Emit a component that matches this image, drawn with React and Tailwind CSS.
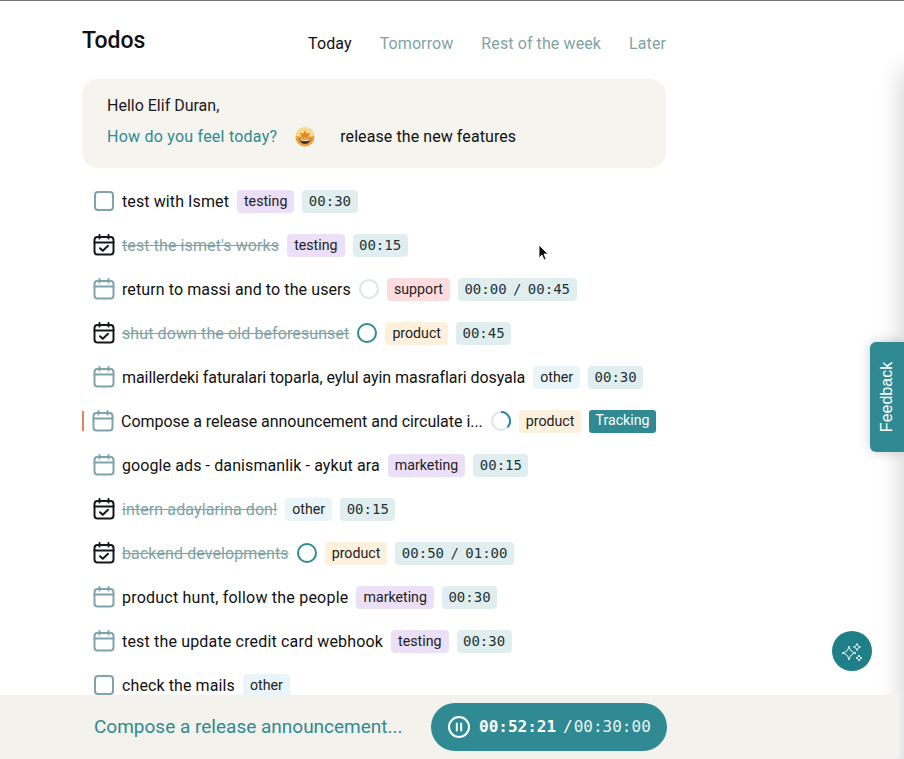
import React from "react";

const tagStyles = {
  testing: "bg-[#ecdff8]",
  support: "bg-[#fcdcde]",
  product: "bg-[#fdf1dd]",
  other: "bg-[#eaf5fb]",
  marketing: "bg-[#ecdff8]",
};

const todos = [
  { text: "test with Ismet", tag: "testing", time: "00:30", icon: "box" },
  { text: "test the ismet's works", tag: "testing", time: "00:15", icon: "done" },
  { text: "return to massi and to the users", tag: "support", time: "00:00 / 00:45", icon: "cal", ring: "idle" },
  { text: "shut down the old beforesunset", tag: "product", time: "00:45", icon: "done", ring: "full" },
  { text: "maillerdeki faturalari toparla, eylul ayin masraflari dosyala", tag: "other", time: "00:30", icon: "cal", spacing: "tracking-[-0.07px]" },
  { text: "Compose a release announcement and circulate i...", tag: "product", icon: "cal", ring: "part", active: true, spacing: "tracking-[-0.03px]" },
  { text: "google ads - danismanlik - aykut ara", tag: "marketing", time: "00:15", icon: "cal" },
  { text: "intern adaylarina don!", tag: "other", time: "00:15", icon: "done" },
  { text: "backend developments", tag: "product", time: "00:50 / 01:00", icon: "done", ring: "full" },
  { text: "product hunt, follow the people", tag: "marketing", time: "00:30", icon: "cal", spacing: "tracking-[0.22px]" },
  { text: "test the update credit card webhook", tag: "testing", time: "00:30", icon: "cal", spacing: "tracking-[0.17px]" },
  { text: "check the mails", tag: "other", icon: "box" },
];

const CalendarIcon = ({ done }) => (
  <svg className="shrink-0" width="22" height="22" viewBox="0 0 22 22" fill="none" stroke={done ? "#14181c" : "#7fa3ab"} strokeWidth="2" strokeLinecap="round" strokeLinejoin="round">
    <rect x="1.5" y="3" width="19" height="17.5" rx="3" />
    <path d="M1.5 8.5h19M6.5 1v3.5M15.5 1v3.5" />
    {done && <path d="M7 14.2l2.8 2.6 5.2-5" />}
  </svg>
);

const StatusIcon = ({ type }) => {
  if (type === "box") {
    return <span className="block shrink-0 w-[20px] h-[20px] mx-px rounded-[4px] border-2 border-[#7fa3ab]" />;
  }
  return <CalendarIcon done={type === "done"} />;
};

const Ring = ({ type }) => {
  if (type === "part") {
    return (
      <svg width="20" height="20" viewBox="0 0 20 20" fill="none" strokeWidth="2">
        <circle cx="10" cy="10" r="9" stroke="#dbe6e6" />
        <path d="M10 1a9 9 0 0 1 6.5 15.2" stroke="#2f8a93" />
      </svg>
    );
  }
  return (
    <span className={`block w-[20px] h-[20px] rounded-full border-2 ${type === "full" ? "border-[#2f8a93]" : "border-[#dbe6e6]"}`} />
  );
};

const StarFace = () => (
  <svg width="20" height="20" viewBox="0 0 20 20">
    <circle cx="10" cy="10" r="9.5" fill="#e9a23b" />
    <path d="M1 9a9 9 0 0 1 18 0c-3 1-15 1-18 0z" fill="#f6dc8e" />
    <path d="M10 3l1.500 3.500 3.500-.8-1.500 4.300h-7L5 5.700l3.500.8z" fill="#e8862a" />
    <path d="M4 11.500c3 1 9 1 12 0-.6 3.500-3 5.500-6 5.500s-5.400-2-6-5.500z" fill="#5d3312" />
    <path d="M5 12c3 .7 7 .7 10 0l-.5 1.500c-3 .6-6 .6-9 0z" fill="#fff" />
  </svg>
);

const TodoRow = ({ todo }) => (
  <div className={`flex items-center h-[44px] whitespace-nowrap ${todo.active ? "pl-0" : "pl-[11px]"}`}>
    {todo.active && <span className="w-[2px] h-[20px] mr-[8px] bg-[#e8814f]" />}
    <StatusIcon type={todo.icon} />
    <span
      className={`ml-[7px] pt-[2px] text-[16px] ${todo.spacing || "tracking-[0.1px]"} ${todo.icon === "done" ? "line-through text-[#7fa3a3]" : "text-[#111]"}`}
    >
      {todo.text}
    </span>
    {todo.ring && (
      <span className="ml-[8px]">
        <Ring type={todo.ring} />
      </span>
    )}
    <span className={`ml-[8px] h-[23px] px-[7px] pt-[2px] flex items-center rounded-[4px] text-[14.2px] text-[#222] ${tagStyles[todo.tag]}`}>
      {todo.tag}
    </span>
    {todo.time && (
      <span className="ml-[8px] h-[23px] px-[6.5px] flex items-center rounded-[4px] bg-[#e1eeef] text-[14px] [word-spacing:-2px] text-[#22343a] font-['DejaVu_Sans_Mono',monospace]">
        {todo.time}
      </span>
    )}
    {todo.active && (
      <span className="ml-[8px] h-[23px] px-[6px] flex items-center rounded-[3px] bg-[#2f8a93] text-[14.2px] text-white">
        Tracking
      </span>
    )}
  </div>
);

export default function App() {
  return (
    <div className="relative h-[759px] w-[904px] overflow-hidden bg-white font-['Roboto',sans-serif] border-t border-[#777] flex flex-col">
      <div className="flex-1 min-h-0 overflow-hidden pl-[82px]">
        <div className="w-[584px]">
          <div className="flex items-center justify-between h-[78px]">
            <h1 className="pt-[3px] text-[23px] font-medium text-[#111]">Todos</h1>
            <div className="flex gap-[28px] text-[16px] tracking-[0.1px] text-[#7fa3a6] pt-[8px]">
              <span className="text-[#111]">Today</span>
              <span>Tomorrow</span>
              <span>Rest of the week</span>
              <span>Later</span>
            </div>
          </div>
          <div className="h-[89px] rounded-[16px] bg-[#f5f4ef] px-[25px] pt-[15px] text-[16px]">
            <div className="text-[#1a1a1a] leading-[24px]">Hello Elif Duran,</div>
            <div className="flex items-center mt-[7px] leading-[24px]">
              <span className="text-[#2f8a93] tracking-[0.23px]">How do you feel today?</span>
              <span className="ml-[18px]">
                <StarFace />
              </span>
              <span className="ml-[25px] text-[#111] tracking-[0.08px]">release the new features</span>
            </div>
          </div>
          <div className="pt-[11px]">
            {todos.map((todo) => (
              <TodoRow key={todo.text} todo={todo} />
            ))}
          </div>
        </div>
      </div>

      {/* right edge shadow of the window */}
      <div className="absolute top-[70px] bottom-[-40px] right-[-20px] w-[20px] bg-[#ccc] shadow-[0_0_26px_rgba(0,0,0,0.22)]" />

      <div className="relative h-[64px] shrink-0 bg-[#f3f2ec] pl-[94px] flex items-center rounded-br-[12px] mr-[4px]">
        <span className="w-[337px] text-[19px] text-[#2f8a93] whitespace-nowrap">Compose a release announcement...</span>
        <div className="w-[236px] h-[48px] rounded-full bg-[#2f8a93] flex items-center pl-[17px] text-white font-['DejaVu_Sans_Mono',monospace] whitespace-nowrap">
          <svg width="22" height="22" viewBox="0 0 22 22" fill="none" stroke="white" strokeWidth="2" strokeLinecap="round">
            <circle cx="11" cy="11" r="10" />
            <path d="M8.800 7.500v7M13.200 7.500v7" />
          </svg>
          <span className="ml-[9px] text-[16px] font-bold">00:52:21</span>
          <span className="ml-[7px] text-[16px] font-light">/</span>
          <span className="ml-[1px] text-[16px] opacity-90">00:30:00</span>
        </div>
      </div>

      <div className="absolute right-0 top-[341px] w-[34px] h-[110px] rounded-l-[6px] bg-[#2f8a93] shadow-[0_0_12px_rgba(0,0,0,0.2)] flex items-center justify-center">
        <span className="-rotate-90 text-[16px] text-white font-['Liberation_Sans',sans-serif] whitespace-nowrap">Feedback</span>
      </div>

      <div className="absolute left-[832px] top-[630px] w-[40px] h-[40px] rounded-full bg-[#1f7f88] flex items-center justify-center">
        <svg width="24" height="24" viewBox="0 0 24 24" fill="none" stroke="white" strokeWidth="1" strokeLinejoin="round">
          <path d="M9 7c.9 4.400 2.600 6.100 7 7-4.400.9-6.100 2.600-7 7-.9-4.400-2.600-6.100-7-7 4.400-.9 6.100-2.600 7-7z" />
          <path d="M17 4.500c.4 2 1.500 3.100 3.500 3.500-2 .4-3.100 1.500-3.500 3.500-.4-2-1.500-3.100-3.500-3.500 2-.4 3.100-1.500 3.500-3.500z" />
          <path d="M19 16c.4 1.700 1.300 2.600 3 3-1.700.4-2.600 1.300-3 3-.4-1.700-1.300-2.600-3-3 1.700-.4 2.600-1.300 3-3z" />
        </svg>
      </div>

      {/* mouse pointer */}
      <svg className="absolute left-[538px] top-[243px]" width="12" height="18" viewBox="0 0 12 18">
        <path d="M1 1v13l3-3 2 5 2-1-2-5h4z" fill="#111" stroke="#fff" strokeWidth="0.8" />
      </svg>
    </div>
  );
}
